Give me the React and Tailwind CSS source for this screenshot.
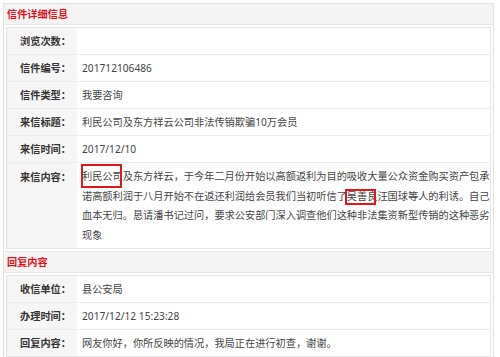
import React from 'react';

const font = { fontFamily: "'Noto Sans', 'Noto Sans CJK SC', sans-serif" };

const letterRows = [
  ['浏览次数：', ''],
  ['信件编号：', '201712106486'],
  ['信件类型：', '我要咨询'],
  ['来信标题：', '利民公司及东方祥云公司非法传销欺骗10万会员'],
  ['来信时间：', '2017/12/10'],
];

const replyRows = [
  ['收信单位：', '县公安局'],
  ['办理时间：', '2017/12/12 15:23:28'],
  ['回复内容：', '网友你好，你所反映的情况，我局正在进行初查，谢谢。'],
];

function Row({ label, children, last, tall }) {
  return (
    <div className={`flex ${last ? '' : 'border-b border-[#ececec]'}`}>
      <div className={`w-[70px] shrink-0 bg-[#f6f6f6] pr-[6px] text-right font-bold text-[#333] ${tall ? 'pt-[5px] leading-[19.5px]' : 'h-[26px] leading-[26px]'}`}>
        {label}
      </div>
      <div className={`relative min-w-0 flex-1 pl-[5px] text-[#444] ${tall ? 'pt-[4px] pb-[3px] leading-[19.5px]' : 'h-[26px] leading-[26px]'}`}>
        {children}
      </div>
    </div>
  );
}

function SectionHeader({ title }) {
  return (
    <div className="h-[21px] bg-[#f4f4f4] border-b border-[#e8e8e8] pl-[3px] text-[#e3101a] font-bold leading-[21px]">
      {title}
    </div>
  );
}

export default function App() {
  return (
    <div className="w-[500px] h-[357px] bg-white pt-[3px] pl-[3px] text-[10.2px]" style={font}>
      <div className="w-[491px] border border-[#e2e2e2]">
        {/* 信件详细信息 */}
        <SectionHeader title="信件详细信息" />
        <div className="p-[2px]">
          <div className="border border-[#e6e6e6]">
            {letterRows.map(([l, v]) => (
              <Row key={l} label={l}>{v}</Row>
            ))}
            <Row label="来信内容：" tall last>
              <div className="w-[410px]">
                利民公司及东方祥云，于今年二月份开始以高额返利为目的吸收大量公众资金购买资产包承诺高额利润于八月开始不在返还利润给会员我们当初听信了吴善良汪国球等人的利诱。自己血本无归。恳请潘书记过问，要求公安部门深入调查他们这种非法集资新型传销的这种恶劣现象
              </div>
              <div className="absolute left-[4px] top-[1px] w-[41px] h-[24px] border-2 border-[#e8141b]" />
              <div className="absolute left-[268px] top-[26px] w-[31px] h-[16px] border-2 border-[#e8141b]" />
            </Row>
          </div>
        </div>

        {/* 回复内容 */}
        <div className="border-t border-[#e8e8e8]">
          <SectionHeader title="回复内容" />
        </div>
        <div className="p-[2px]">
          <div className="border border-[#e6e6e6]">
            {replyRows.map(([l, v], i) => (
              <Row key={l} label={l} last={i === replyRows.length - 1}>{v}</Row>
            ))}
          </div>
        </div>
      </div>
    </div>
  );
}
